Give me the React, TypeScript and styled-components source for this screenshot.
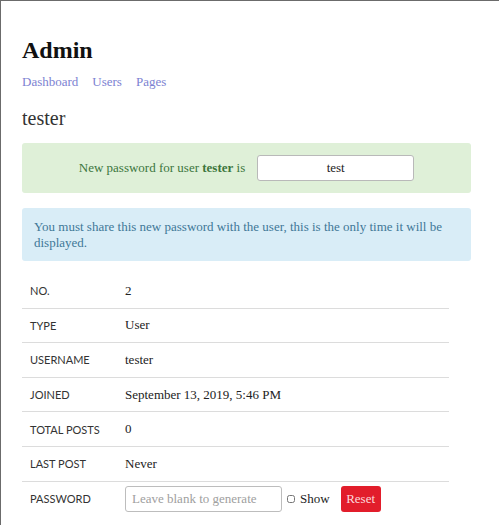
import React, { useState } from 'react';
import styled, { createGlobalStyle } from 'styled-components';

const GlobalStyle = createGlobalStyle`
  html, body {
    margin: 0;
    padding: 0;
    background: #fff;
  }

  body {
    font-family: "Liberation Serif", "Times New Roman", serif;
    color: #222;
    border-top: 1px solid #6b6b6b;
    border-left: 1px solid #6b6b6b;
    min-height: 525px;
    box-sizing: border-box;
  }
`;

const rows: [string, string][] = [
  ['No.', '2'],
  ['Type', 'User'],
  ['Username', 'tester'],
  ['Joined', 'September 13, 2019, 5:46 PM'],
  ['Total posts', '0'],
  ['Last post', 'Never'],
];

const App: React.FC = () => {
  const [show, setShow] = useState<boolean>(false);

  return (
    <>
      <GlobalStyle />
      <Page>
        <Title>Admin</Title>
        <Nav>
          <NavLink href="#">Dashboard</NavLink>
          <NavLink href="#">Users</NavLink>
          <NavLink href="#">Pages</NavLink>
        </Nav>
        <UserName>tester</UserName>

        <Alert kind="success" centered>
          <span>
            New password for user <b>tester</b> is
          </span>
          <NewPassword readOnly value="test" />
        </Alert>

        <Alert kind="info">
          You must share this new password with the user, this is the only time it will be
          displayed.
        </Alert>

        <Table>
          {rows.map(([label, value]) => (
            <Row key={label}>
              <Label>{label}</Label>
              <Value>{value}</Value>
            </Row>
          ))}
          <Row>
            <Label>Password</Label>
            <PasswordCell>
              <PasswordInput
                type={show ? 'text' : 'password'}
                placeholder="Leave blank to generate"
              />
              <ShowToggle>
                <input
                  type="checkbox"
                  checked={show}
                  onChange={() => setShow(!show)}
                />
                Show
              </ShowToggle>
              <ResetButton>Reset</ResetButton>
            </PasswordCell>
          </Row>
        </Table>
      </Page>
    </>
  );
};

export default App;

const Page = styled.main`
  padding: 35px 28px 0 21px;
`;

const Title = styled.h1`
  margin: 0;
  font-size: 24px;
  line-height: 28px;
  font-weight: bold;
  color: #111;
`;

const Nav = styled.nav`
  display: flex;
  gap: 14px;
  margin-top: 10px;
  font-size: 13px;
  line-height: 16px;
`;

const NavLink = styled.a`
  color: #7c82d2;
  text-decoration: none;
`;

const UserName = styled.h2`
  margin: 16px 0 0;
  font-size: 20px;
  line-height: 24px;
  font-weight: normal;
  color: #333;
`;

const Alert = styled.div<{ kind: 'success' | 'info'; centered?: boolean }>`
  display: flex;
  align-items: center;
  justify-content: ${p => (p.centered ? 'center' : 'flex-start')};
  gap: 12px;
  margin-top: ${p => (p.kind === 'success' ? '13px' : '15px')};
  padding: ${p => (p.kind === 'success' ? '12px' : '11px 12px')};
  border-radius: 3px;
  font-size: 13px;
  line-height: 15.5px;
  background: ${p => (p.kind === 'success' ? '#dff0d8' : '#d9edf7')};
  color: ${p => (p.kind === 'success' ? '#3c763d' : '#3f7898')};

  b {
    font-weight: bold;
  }
`;

const NewPassword = styled.input`
  width: 157px;
  height: 26px;
  box-sizing: border-box;
  border: 1px solid #b9b9b9;
  border-radius: 3px;
  background: #fff;
  text-align: center;
  font-family: "Liberation Serif", serif;
  font-size: 13px;
  color: #222;
  outline: none;
`;

const Table = styled.div`
  width: 95%;
  margin-top: 13px;
`;

const Row = styled.div`
  display: grid;
  grid-template-columns: 103px 1fr;
  align-items: center;
  height: 34.6px;
  box-sizing: border-box;
  border-bottom: 1px solid #dcdcdc;

  &:last-child {
    border-bottom: none;
  }
`;

const Label = styled.div`
  padding-left: 8px;
  font-family: Lato, "Liberation Sans", sans-serif;
  font-size: 11px;
  text-transform: uppercase;
  color: #333;
`;

const Value = styled.div`
  font-size: 13px;
  color: #222;
`;

const PasswordCell = styled.div`
  display: flex;
  align-items: center;
`;

const PasswordInput = styled.input`
  width: 157px;
  height: 26px;
  box-sizing: border-box;
  padding: 0 6px;
  border: 1px solid #bdbdbd;
  border-radius: 3px;
  font-family: "Liberation Serif", serif;
  font-size: 13px;
  outline: none;

  &::placeholder {
    color: #a0a0a0;
  }
`;

const ShowToggle = styled.label`
  display: flex;
  align-items: center;
  margin-left: 4px;
  font-size: 13px;
  color: #222;

  input {
    width: 8px;
    height: 8px;
    margin: 0 5px 0 1px;
  }
`;

const ResetButton = styled.button`
  margin-left: 11px;
  width: 40px;
  height: 26px;
  padding: 0;
  border: none;
  border-radius: 3px;
  background: #e21d2b;
  color: #fcd9dc;
  font-family: "Liberation Serif", serif;
  font-size: 13px;
`;
